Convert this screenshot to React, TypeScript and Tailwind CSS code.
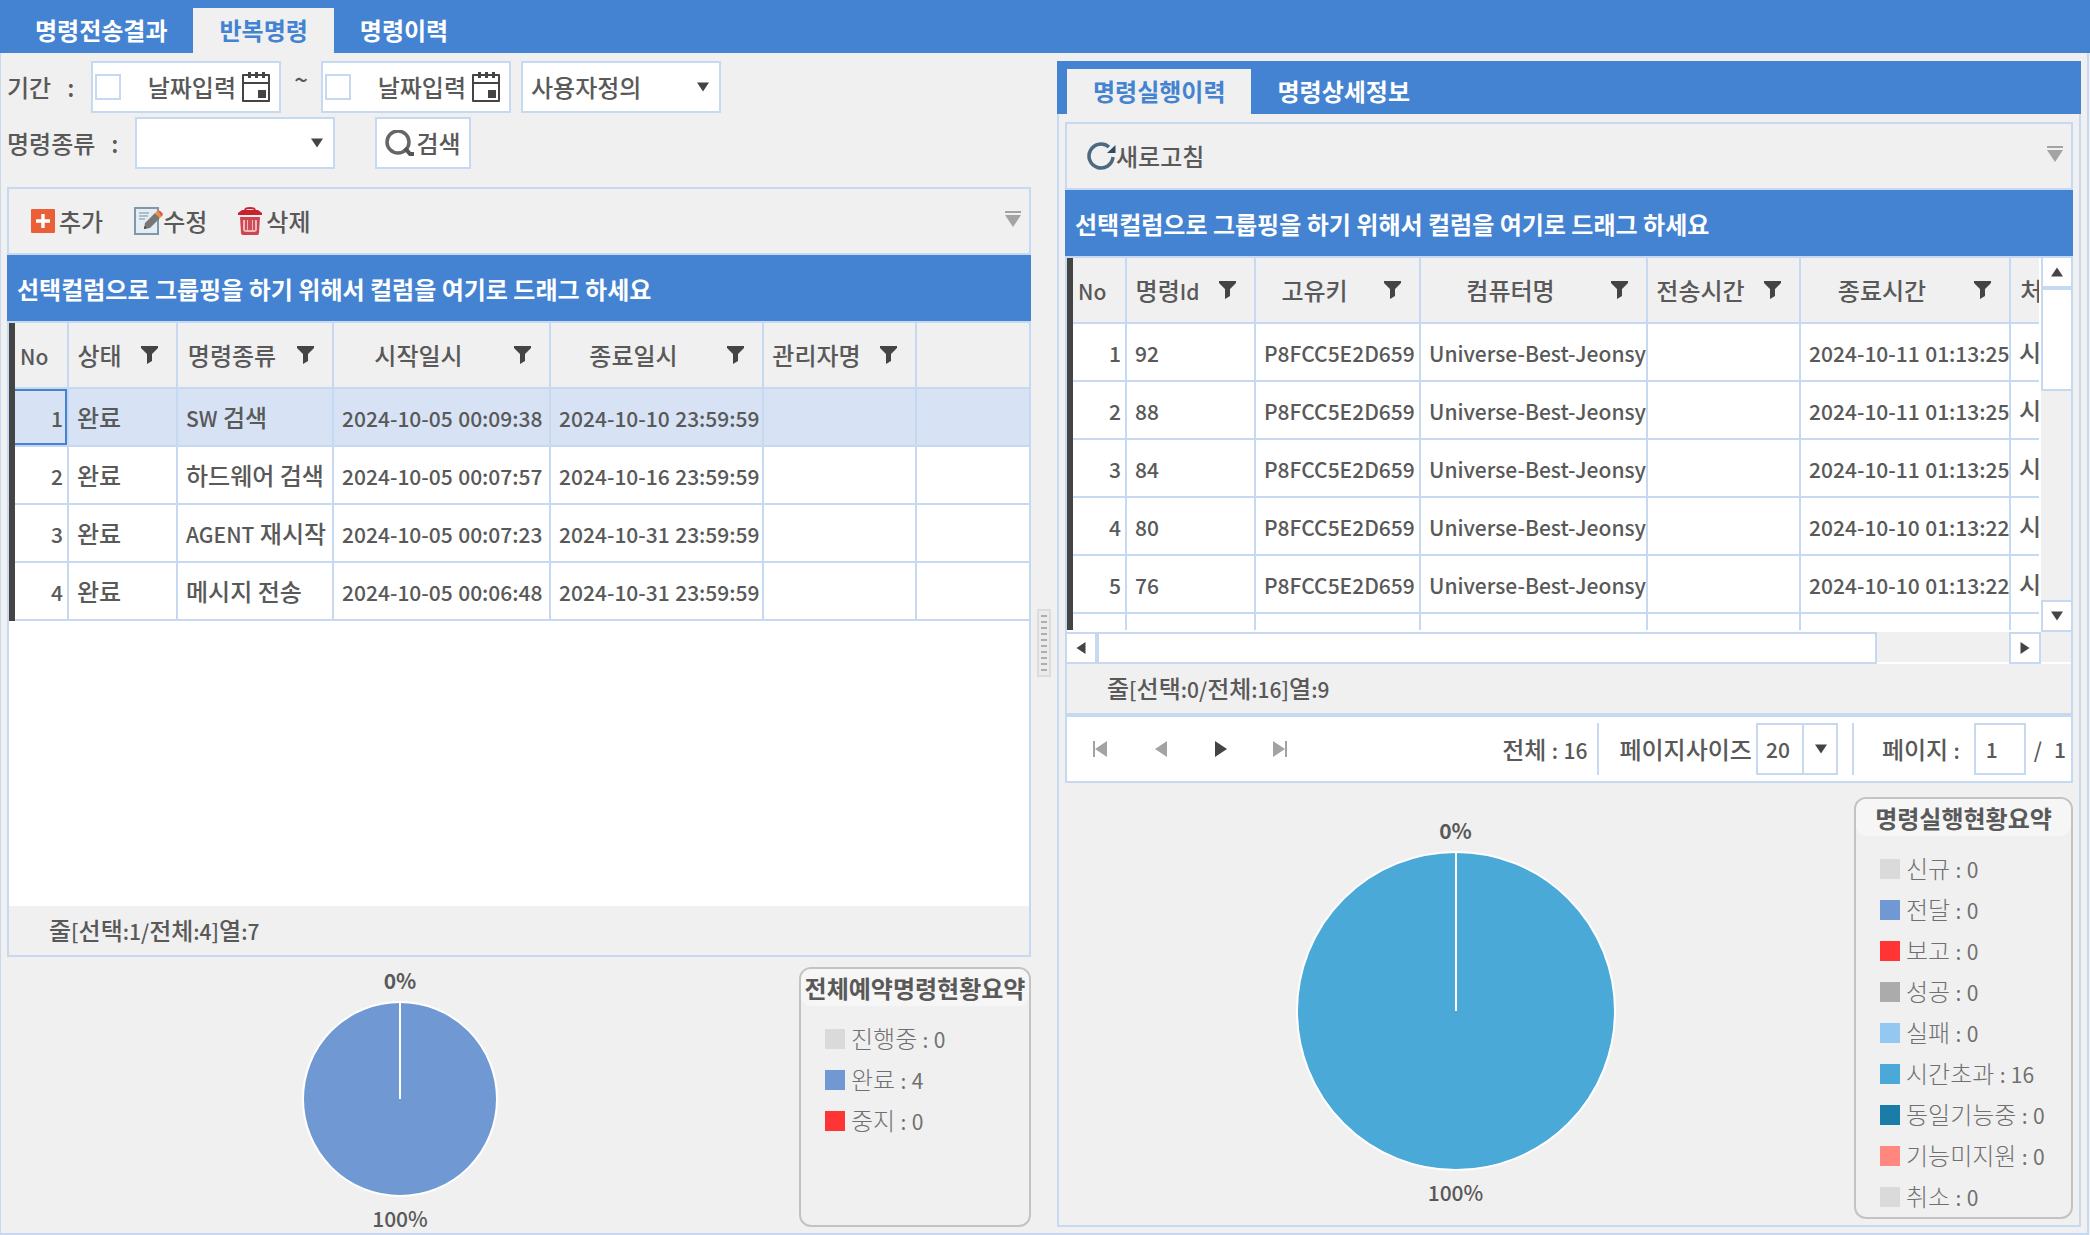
import type { ReactNode } from "react";

const LINE = "border-[#c6d9f1]";

/* Latin runs are set one step smaller than the Hangul around them. */
function Mixed({ text, latin = "text-[21px]" }: { text: string; latin?: string }) {
  return (
    <>
      {text.split(/([\x21-\x7e]+)/).map((part, i) =>
        i % 2 === 1 ? (
          <span key={i} className={latin}>
            {part}
          </span>
        ) : (
          part
        ),
      )}
    </>
  );
}

function Funnel() {
  return (
    <svg width="17" height="18" viewBox="0 0 17 18" fill="#444" aria-hidden="true">
      <path d="M0 0h17v2l-6 6v7l-5 3V8L0 2z" />
    </svg>
  );
}

function Tri({ dir, color = "#444", size = 12 }: { dir: "up" | "down" | "left" | "right"; color?: string; size?: number }) {
  const d = {
    up: "M6 1.5 12 10.5H0z",
    down: "M6 10.5 0 1.5H12z",
    left: "M1.5 6 10.5 0V12z",
    right: "M10.5 6 1.5 0V12z",
  }[dir];
  return (
    <svg width={size} height={size} viewBox="0 0 12 12" fill={color} aria-hidden="true">
      <path d={d} />
    </svg>
  );
}

function CalendarIcon() {
  return (
    <svg width="28" height="30" viewBox="0 0 28 30" aria-hidden="true">
      <path d="M1 3h26v26H1z" fill="none" stroke="#444" strokeWidth="2" strokeLinejoin="round" />
      <path d="M1 11h26" stroke="#444" strokeWidth="2" />
      <path d="M6 0h3v6H6zM13 0h3v6h-3zM20 0h3v6h-3zM16 18h8v8h-8z" fill="#444" />
    </svg>
  );
}

function SearchIcon() {
  return (
    <svg width="31" height="26" viewBox="0 0 31 26" fill="none" aria-hidden="true">
      <circle cx="13" cy="12" r="11" stroke="#666" strokeWidth="3.500" />
      <path d="M20 18l5 6h4" stroke="#555" strokeWidth="4" />
    </svg>
  );
}

function PlusIcon() {
  return (
    <svg width="24" height="24" viewBox="0 0 24 24" aria-hidden="true">
      <rect width="24" height="24" rx="1" fill="#ea5f37" />
      <path d="M12 5v14M5 12h14" stroke="#fff" strokeWidth="3.4" />
    </svg>
  );
}

function EditIcon() {
  return (
    <svg width="29" height="28" viewBox="0 0 29 28" aria-hidden="true">
      <rect x="1" y="1" width="23" height="26" fill="#e6edf2" stroke="#7f99ac" strokeWidth="2" />
      <path d="M5 6h10M5 9h9M5 12h6" stroke="#a9bfd0" strokeWidth="2" />
      <path d="M10 22l1-6L21 6l5 5-10 10z" fill="#777" />
      <path d="M21 6l2-2c1-1 6 3 5 5l-2 2z" fill="#ee9338" />
      <path d="M24 3.500c2 0 4 1.500 5 4l-1.500 2z" fill="#e0574a" />
      <path d="M10 22l.6-3 2.400 2z" fill="#444" />
    </svg>
  );
}

function TrashIcon() {
  return (
    <svg width="24" height="28" viewBox="0 0 24 28" aria-hidden="true">
      <path d="M7 4c0-3 2-3 5-3s5 0 5 3" fill="none" stroke="#c1272d" strokeWidth="2" />
      <path d="M0 8V6l4-3h16l4 3v2z" fill="#c8222f" />
      <path d="M2 10h20l-1 16q0 2-2 2H5q-2 0-2-2z" fill="#cf4450" />
      <path d="M5 13h14v9q0 3-3 3H8q-3 0-3-3z" fill="#ecb9be" />
      <path d="M8 13v10M11 13v10M13 13v10M16 13v10" stroke="#c8323e" strokeWidth="1.600" />
    </svg>
  );
}

function RefreshIcon() {
  return (
    <svg width="29" height="28" viewBox="0 0 29 28" fill="none" aria-hidden="true">
      <path d="M26 15A12 12 0 1 1 22 5" stroke="#4d697f" strokeWidth="3.500" />
      <path d="M28.500 3v8H20z" fill="#2b4a66" />
    </svg>
  );
}

function MoreIcon() {
  return (
    <button type="button" aria-label="도구 더보기">
      <svg width="16" height="16" viewBox="0 0 16 16" fill="#a3a3a3" aria-hidden="true">
        <path d="M0 0h16v2H0zM0 4h16l-8 12z" />
      </svg>
    </button>
  );
}

function Tabs({ items, active, label, className }: { items: string[]; active: number; label: string; className: string }) {
  return (
    <div role="tablist" aria-label={label} className={`flex h-[53px] items-end bg-[#4483d1] ${className}`}>
      {items.map((t, i) => (
        <button
          key={t}
          type="button"
          role="tab"
          aria-selected={i === active}
          className={
            i === active
              ? "h-[45px] bg-[#f0f0f0] px-[26px] pb-px font-bold text-[#4483d1]"
              : "h-[45px] px-[26px] pb-px font-bold text-white"
          }
        >
          {t}
        </button>
      ))}
    </div>
  );
}

function DateField({ id, label }: { id: string; label: string }) {
  return (
    <div className={`flex h-[52px] w-[190px] items-center border-2 bg-white ${LINE}`}>
      <input
        type="checkbox"
        aria-label={`${label} 사용`}
        className={`ml-0.5 size-[26px] shrink-0 appearance-none border-2 bg-white ${LINE}`}
      />
      <input
        id={id}
        type="text"
        aria-label={label}
        defaultValue="날짜입력"
        className="mr-1.5 min-w-0 flex-1 bg-transparent text-right outline-none"
      />
      <button type="button" aria-label={`${label} 달력`} className="mr-[9px] shrink-0">
        <CalendarIcon />
      </button>
    </div>
  );
}

function Dropdown({ id, value, label }: { id: string; value: string; label?: string }) {
  return (
    <div className="relative w-[200px]">
      <select
        id={id}
        aria-label={label}
        className={`h-[52px] w-full appearance-none border-2 bg-white pr-8 pl-2 outline-none ${LINE}`}
      >
        <option>{value}</option>
      </select>
      <span className="pointer-events-none absolute inset-y-0 right-3 flex items-center">
        <Tri dir="down" />
      </span>
    </div>
  );
}

function ToolButton({ icon, children }: { icon: ReactNode; children: ReactNode }) {
  return (
    <button type="button" className="flex items-center">
      {icon}
      {children}
    </button>
  );
}

function GroupBar() {
  return (
    <div className="flex h-[66px] items-center bg-[#4483d1] px-2.5 pt-0.5 font-bold text-white">
      선택컬럼으로 그룹핑을 하기 위해서 컬럼을 여기로 드래그 하세요
    </div>
  );
}

type Col = { title: string; width?: string; filter?: boolean };

function Grid({ cols, rows, selected, className }: { cols: Col[]; rows: string[][]; selected?: number; className: string }) {
  return (
    <table className={`table-fixed border-separate border-spacing-0 ${className}`}>
      <colgroup>
        {cols.map((c, i) => (
          <col key={i} className={c.width} />
        ))}
      </colgroup>
      <thead>
        <tr>
          {cols.map((c, i) => (
            <th
              key={i}
              scope="col"
              className={`h-[66px] border-b-2 bg-[#f0f0f0] p-0 font-medium whitespace-nowrap ${LINE} ${
                i < cols.length - 1 ? "border-r-2" : ""
              }`}
            >
              {c.filter ? (
                <div className="flex items-center pl-0.5">
                  <span className="flex-1 text-center">
                    <Mixed text={c.title} />
                  </span>
                  <button type="button" aria-label={`${c.title} 필터`} className="w-12 shrink-0 pl-[13px]">
                    <Funnel />
                  </button>
                </div>
              ) : (
                <div className="pl-[5px] text-left">
                  <Mixed text={c.title} />
                </div>
              )}
            </th>
          ))}
        </tr>
      </thead>
      <tbody>
        {rows.map((r, ri) => (
          <tr key={ri} className={ri === selected ? "bg-[#d7e3f5]" : "bg-white"}>
            {cols.map((c, i) => (
              <td
                key={i}
                className={`h-[58px] border-b-2 p-0 whitespace-nowrap ${LINE} ${i < cols.length - 1 ? "border-r-2" : ""}`}
              >
                <div
                  className={
                    i === 0
                      ? ri === selected
                        ? "flex h-14 items-center justify-end border-y-2 border-r-2 border-[#4483d1] pr-0.5"
                        : "flex h-14 items-center justify-end pr-1"
                      : "flex h-14 items-center pl-2"
                  }
                >
                  <span>
                    <Mixed text={r[i] ?? ""} />
                  </span>
                </div>
              </td>
            ))}
          </tr>
        ))}
      </tbody>
    </table>
  );
}

function Pie({ r, color, label }: { r: number; color: string; label: string }) {
  const s = r * 2 + 2;
  const c = s / 2;
  return (
    <div className="flex flex-1 flex-col items-center text-[21px] leading-[26px]">
      <span className="font-bold">0%</span>
      <svg width={s} height={s} viewBox={`0 0 ${s} ${s}`} role="img" aria-label={label} className="my-2">
        <circle cx={c} cy={c} r={r} fill={color} stroke="#fff" strokeWidth="2" />
        <path d={`M${c} 0V${c}`} stroke="#fff" strokeWidth="2" />
      </svg>
      <span>100%</span>
    </div>
  );
}

function Legend({ title, items, className }: { title: string; items: [string, string][]; className: string }) {
  return (
    <section className={`shrink-0 rounded-xl border-2 border-[#c3c3c3] ${className}`}>
      <h2 className="flex h-[37px] items-center justify-center rounded-[10px] bg-[#f6f6f6] font-bold whitespace-nowrap">{title}</h2>
      <ul className="mt-3 pl-6 font-light text-[#707070]">
        {items.map(([text, color]) => (
          <li key={text} className="flex h-[41px] items-center gap-1.5">
            <span className={`size-5 ${color}`} />
            <span>
              <Mixed text={text} latin="text-[21px] font-normal" />
            </span>
          </li>
        ))}
      </ul>
    </section>
  );
}

const leftCols: Col[] = [
  { title: "No", width: "w-[54px]" },
  { title: "상태", width: "w-[109px]", filter: true },
  { title: "명령종류", width: "w-[156px]", filter: true },
  { title: "시작일시", width: "w-[217px]", filter: true },
  { title: "종료일시", width: "w-[213px]", filter: true },
  { title: "관리자명", width: "w-[153px]", filter: true },
  { title: "" },
];

const leftRows = [
  ["1", "완료", "SW 검색", "2024-10-05 00:09:38", "2024-10-10 23:59:59"],
  ["2", "완료", "하드웨어 검색", "2024-10-05 00:07:57", "2024-10-16 23:59:59"],
  ["3", "완료", "AGENT 재시작", "2024-10-05 00:07:23", "2024-10-31 23:59:59"],
  ["4", "완료", "메시지 전송", "2024-10-05 00:06:48", "2024-10-31 23:59:59"],
];

const rightCols: Col[] = [
  { title: "No", width: "w-[54px]" },
  { title: "명령Id", width: "w-[129px]", filter: true },
  { title: "고유키", width: "w-[165px]", filter: true },
  { title: "컴퓨터명", width: "w-[227px]", filter: true },
  { title: "전송시간", width: "w-[153px]", filter: true },
  { title: "종료시간", width: "w-[210px]", filter: true },
  { title: "처리상태", width: "w-[153px]", filter: true },
];

const rightRows = [
  ["1", "92", "P8FCC5E2D659", "Universe-Best-Jeonsy", "", "2024-10-11 01:13:25", "시간초과"],
  ["2", "88", "P8FCC5E2D659", "Universe-Best-Jeonsy", "", "2024-10-11 01:13:25", "시간초과"],
  ["3", "84", "P8FCC5E2D659", "Universe-Best-Jeonsy", "", "2024-10-11 01:13:25", "시간초과"],
  ["4", "80", "P8FCC5E2D659", "Universe-Best-Jeonsy", "", "2024-10-10 01:13:22", "시간초과"],
  ["5", "76", "P8FCC5E2D659", "Universe-Best-Jeonsy", "", "2024-10-10 01:13:22", "시간초과"],
  ["", "", "", "", "", "", ""],
];

function Filters() {
  return (
    <form className="flex flex-col gap-1 pt-2">
      <div className="flex items-center">
        <label htmlFor="from" className="flex w-[84px] shrink-0 gap-4">
          기간 <span>:</span>
        </label>
        <DateField id="from" label="시작일" />
        <span className="w-10 pb-4 text-center">~</span>
        <DateField id="to" label="종료일" />
        <div className="w-2.5" />
        <Dropdown id="preset" value="사용자정의" label="기간 선택" />
      </div>
      <div className="flex items-center">
        <label htmlFor="kind" className="flex w-32 shrink-0 gap-4">
          명령종류 <span>:</span>
        </label>
        <Dropdown id="kind" value="" />
        <button type="button" className={`ml-10 flex h-[52px] w-24 items-center justify-center border-2 bg-white ${LINE}`}>
          <SearchIcon />
          검색
        </button>
      </div>
    </form>
  );
}

function LeftPane() {
  return (
    <div className="flex min-w-0 flex-col">
      <Filters />
      <section className={`mt-[18px] flex flex-1 flex-col border-b-2 ${LINE}`}>
        <div className={`flex h-[68px] items-center gap-[31px] border-2 pr-2 pl-[22px] ${LINE}`}>
          <ToolButton icon={<span className="mr-1"><PlusIcon /></span>}>추가</ToolButton>
          <ToolButton icon={<EditIcon />}>수정</ToolButton>
          <ToolButton icon={<span className="mr-1"><TrashIcon /></span>}>삭제</ToolButton>
          <div className="ml-auto flex pb-1">
            <MoreIcon />
          </div>
        </div>
        <GroupBar />
        <div className={`flex flex-1 flex-col border-x-2 border-t-2 bg-white ${LINE}`}>
          <div className="flex-1">
            <div className="border-l-[6px] border-[#444]">
              <Grid cols={leftCols} rows={leftRows} selected={0} className="w-full" />
            </div>
          </div>
          <div className="flex h-[49px] items-center bg-[#f0f0f0] pl-10">
            <span>
              <Mixed text="줄[선택:1/전체:4]열:7" />
            </span>
          </div>
        </div>
      </section>
      <div className="flex min-h-[276px] pt-2.5 pb-1.5">
        <div className="-mb-1.5 -ml-1.5 flex flex-1">
          <Pie r={97} color="#7098d3" label="완료 100%" />
        </div>
        <Legend
          title="전체예약명령현황요약"
          className="w-[232px]"
          items={[
            ["진행중 : 0", "bg-[#dadada]"],
            ["완료 : 4", "bg-[#7098d3]"],
            ["중지 : 0", "bg-[#ff3434]"],
          ]}
        />
      </div>
    </div>
  );
}

function Pager() {
  return (
    <div className={`flex h-[70px] items-center border-x-2 border-t-4 border-b-2 bg-white pr-[5px] ${LINE}`}>
      <nav aria-label="페이지 이동" className="flex items-center pl-[26px]">
        <button type="button" aria-label="처음" className="mr-12">
          <svg width="14" height="16" viewBox="0 0 14 16" fill="#a3a3a3">
            <path d="M0 0h2v16H0zM14 0v16L2 8z" />
          </svg>
        </button>
        <button type="button" aria-label="이전" className="mr-12">
          <svg width="12" height="16" viewBox="0 0 12 16" fill="#a3a3a3">
            <path d="M12 0v16L0 8z" />
          </svg>
        </button>
        <button type="button" aria-label="다음" className="mr-[46px]">
          <svg width="12" height="16" viewBox="0 0 12 16" fill="#444">
            <path d="M0 0v16l12-8z" />
          </svg>
        </button>
        <button type="button" aria-label="마지막">
          <svg width="14" height="16" viewBox="0 0 14 16" fill="#a3a3a3">
            <path d="M12 0h2v16h-2zM0 0v16l12-8z" />
          </svg>
        </button>
      </nav>
      <span className="ml-auto">
        <Mixed text="전체 : 16" />
      </span>
      <div className={`ml-2.5 h-[52px] border-l-2 ${LINE}`} />
      <label htmlFor="size" className="ml-5">
        페이지사이즈
      </label>
      <div className="relative ml-1 w-[82px]">
        <select id="size" className={`h-[52px] w-full appearance-none border-2 bg-white pl-2 text-[21px] outline-none ${LINE}`}>
          <option>20</option>
        </select>
        <span className={`pointer-events-none absolute inset-y-0 right-0 flex w-9 items-center justify-center border-l-2 ${LINE}`}>
          <Tri dir="down" />
        </span>
      </div>
      <div className={`ml-3.5 h-[52px] border-l-2 ${LINE}`} />
      <label htmlFor="page" className="ml-7">
        <Mixed text="페이지 :" />
      </label>
      <input
        id="page"
        type="text"
        defaultValue="1"
        className={`ml-3.5 h-[52px] w-[52px] border-2 bg-white pl-2.5 text-[21px] outline-none ${LINE}`}
      />
      <span className="ml-2 flex gap-3 text-[21px]">
        <span>/</span>
        <span>1</span>
      </span>
    </div>
  );
}

function RightPane() {
  return (
    <div className="flex min-w-0 flex-col pt-2 pb-1.5">
      <Tabs items={["명령실행이력", "명령상세정보"]} active={0} label="명령 상세" className="pl-2.5" />
      <div className={`flex flex-1 flex-col border-x-2 border-b-2 px-1.5 pt-2 ${LINE}`}>
        <div className={`flex h-[68px] items-center border-2 pr-2 pl-5 ${LINE}`}>
          <ToolButton icon={<RefreshIcon />}>새로고침</ToolButton>
          <div className="ml-auto flex pb-1">
            <MoreIcon />
          </div>
        </div>
        <GroupBar />
        <div className={`flex h-[376px] border-x-2 border-t-2 bg-white ${LINE}`}>
          <div className="mb-0.5 min-w-0 flex-1 overflow-hidden border-l-[6px] border-[#444]">
            <Grid cols={rightCols} rows={rightRows} className="w-[1091px]" />
          </div>
          <div className="-mt-0.5 ml-0.5 flex w-[30px] flex-col bg-[#f0f0f0]">
            <button type="button" aria-label="위로" className={`flex h-8 items-center justify-center border-y-2 border-l-2 bg-white ${LINE}`}>
              <Tri dir="up" />
            </button>
            <div className={`h-[103px] border-y-2 border-l-2 bg-white ${LINE}`} />
            <button
              type="button"
              aria-label="아래로"
              className={`mt-auto flex h-8 items-center justify-center border-y-2 border-l-2 bg-white ${LINE}`}
            >
              <Tri dir="down" />
            </button>
          </div>
        </div>
        <div className={`flex h-8 border-x-2 ${LINE}`}>
          <button type="button" aria-label="왼쪽" className={`flex w-[30px] items-center justify-center border-y-2 border-r-2 bg-white ${LINE}`}>
            <Tri dir="left" />
          </button>
          <div className={`w-[780px] border-2 bg-white ${LINE}`} />
          <div className="flex-1 border-b-2 border-white" />
          <button type="button" aria-label="오른쪽" className={`flex w-8 items-center justify-center border-2 bg-white ${LINE}`}>
            <Tri dir="right" />
          </button>
          <div className="w-[30px] border-b-2 border-white" />
        </div>
        <div className={`flex h-[49px] items-center border-x-2 pl-10 ${LINE}`}>
          <span>
            <Mixed text="줄[선택:0/전체:16]열:9" />
          </span>
        </div>
        <Pager />
        <div className="flex flex-1 pt-3.5 pb-1.5">
          <div className="-ml-2 flex flex-1 pt-5">
            <Pie r={159} color="#4aa9d6" label="시간초과 100%" />
          </div>
          <Legend
            title="명령실행현황요약"
            className="w-[219px]"
            items={[
              ["신규 : 0", "bg-[#dadada]"],
              ["전달 : 0", "bg-[#7098d3]"],
              ["보고 : 0", "bg-[#ff3434]"],
              ["성공 : 0", "bg-[#ababab]"],
              ["실패 : 0", "bg-[#94c8f0]"],
              ["시간초과 : 16", "bg-[#4aa9d6]"],
              ["동일기능중 : 0", "bg-[#1c7ca8]"],
              ["기능미지원 : 0", "bg-[#ff877f]"],
              ["취소 : 0", "bg-[#dadada]"],
            ]}
          />
        </div>
      </div>
    </div>
  );
}

export default function App() {
  return (
    <div className="flex min-h-screen flex-col bg-[#f0f0f0] font-['Noto_Sans_CJK_KR',sans-serif] text-2xl leading-8 font-medium text-[#595959]">
      <Tabs items={["명령전송결과", "반복명령", "명령이력"]} active={1} label="명령 관리" className="pl-[9px]" />
      <main className={`mr-px grid flex-1 grid-cols-[1024fr_26px_1024fr] border-r-2 border-b-2 border-l px-1.5 ${LINE}`}>
        <LeftPane />
        <div className="flex items-center justify-center">
          <div
            role="separator"
            aria-orientation="vertical"
            className="flex h-[68px] w-3.5 flex-col items-center justify-center gap-1 border-2 border-[#dcdcdc] bg-[#ebebeb]"
          >
            {Array.from({ length: 10 }, (_, i) => (
              <span key={i} className="h-0.5 w-1.5 bg-[#adadad]" />
            ))}
          </div>
        </div>
        <RightPane />
      </main>
    </div>
  );
}
